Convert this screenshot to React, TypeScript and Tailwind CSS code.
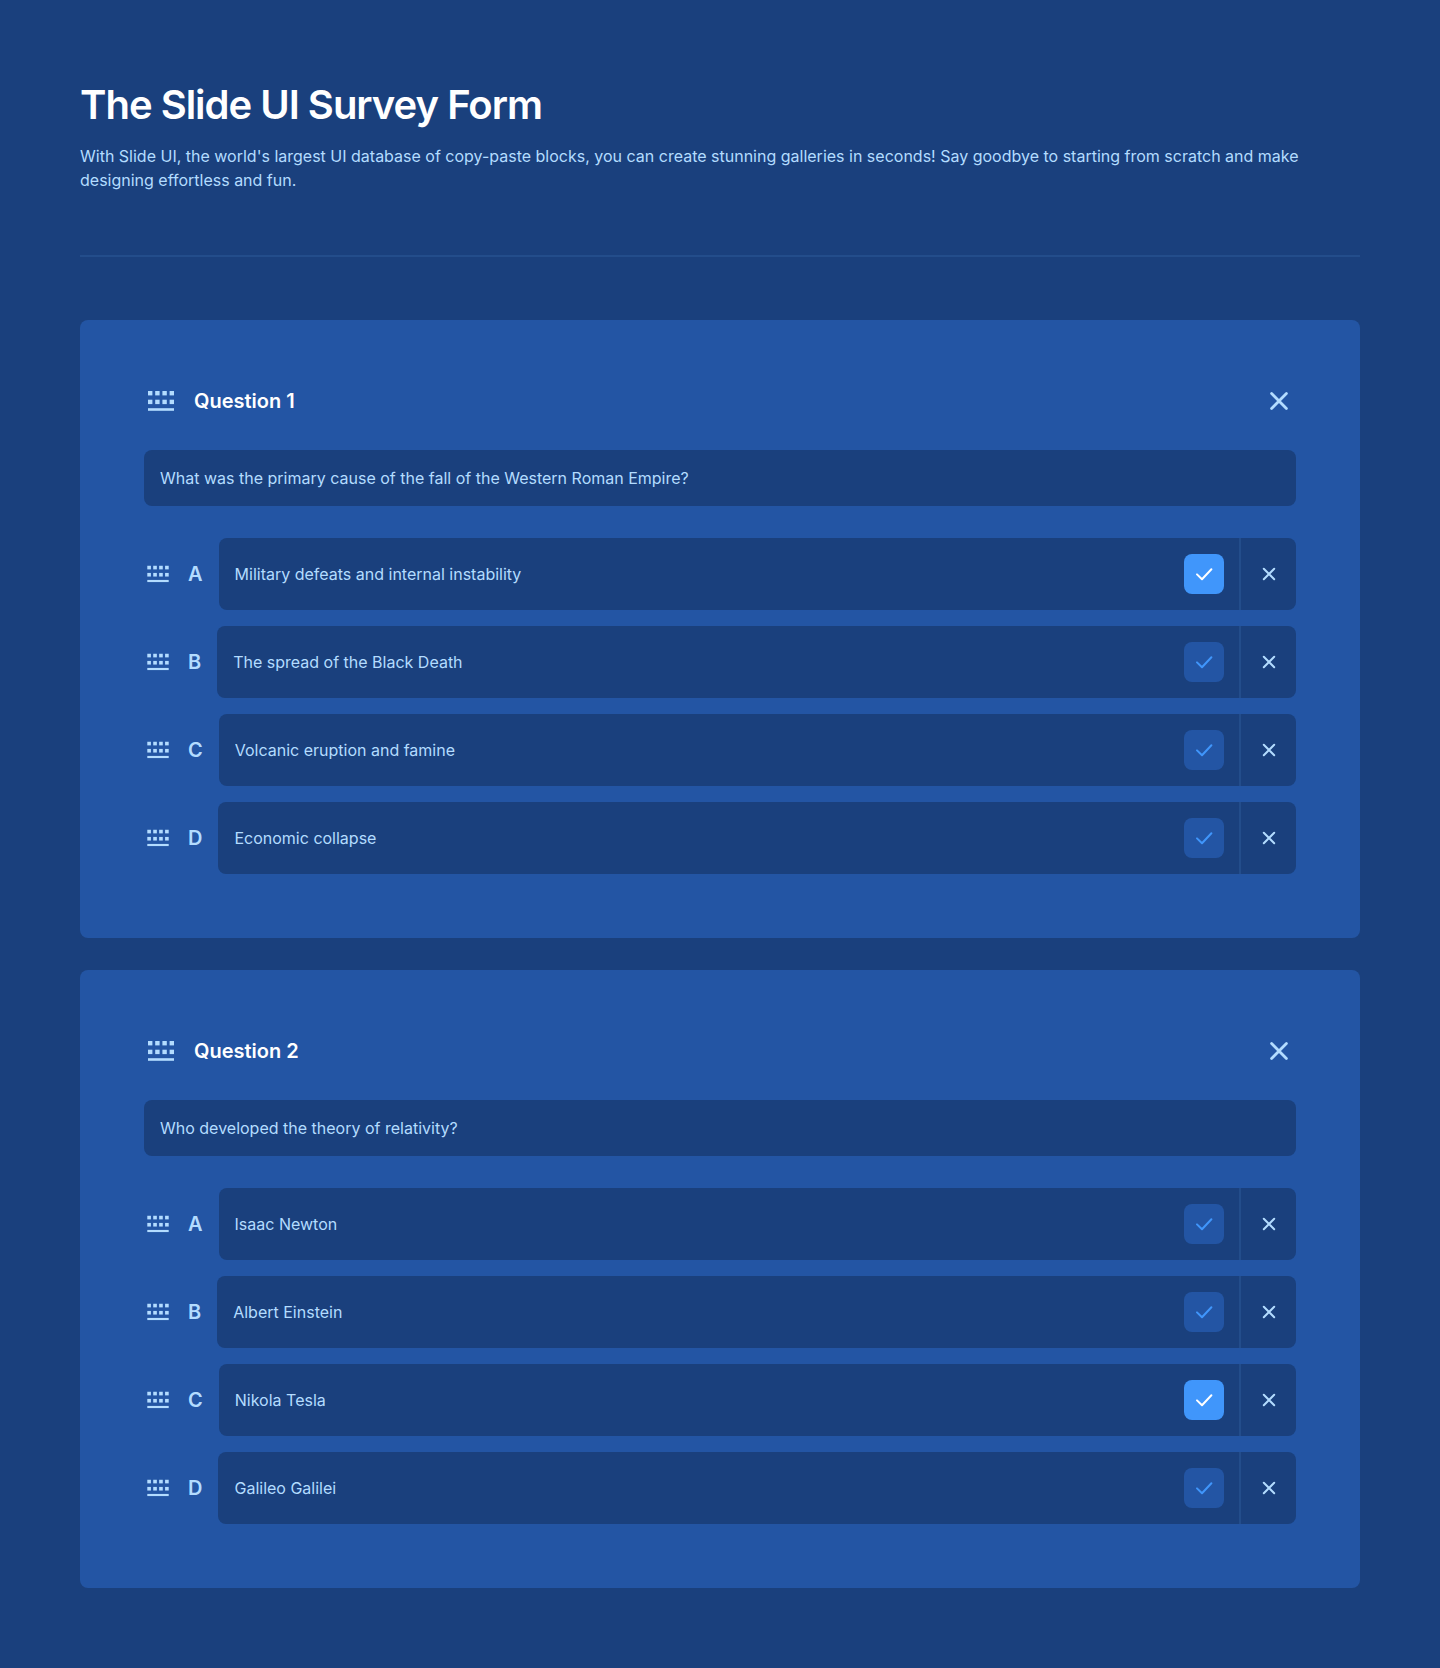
import { useState } from "react";

type Answer = { id: string; letter: string; text: string; correct: boolean };
type Question = { id: number; prompt: string; answers: Answer[] };

const initialQuestions: Question[] = [
  {
    id: 1,
    prompt: "What was the primary cause of the fall of the Western Roman Empire?",
    answers: [
      { id: "1a", letter: "A", text: "Military defeats and internal instability", correct: true },
      { id: "1b", letter: "B", text: "The spread of the Black Death", correct: false },
      { id: "1c", letter: "C", text: "Volcanic eruption and famine", correct: false },
      { id: "1d", letter: "D", text: "Economic collapse", correct: false },
    ],
  },
  {
    id: 2,
    prompt: "Who developed the theory of relativity?",
    answers: [
      { id: "2a", letter: "A", text: "Isaac Newton", correct: false },
      { id: "2b", letter: "B", text: "Albert Einstein", correct: false },
      { id: "2c", letter: "C", text: "Nikola Tesla", correct: true },
      { id: "2d", letter: "D", text: "Galileo Galilei", correct: false },
    ],
  },
];

function GripIcon({ className }: { className: string }) {
  return (
    <svg viewBox="0 0 34 34" className={className} fill="currentColor" aria-hidden="true">
      {[4, 11.2, 18.4, 25.6].map((x) => (
        <g key={x}>
          <rect x={x} y={7} width={4.4} height={4.4} />
          <rect x={x} y={15.7} width={4.4} height={4.4} />
        </g>
      ))}
      <rect x={4} y={24.2} width={26} height={2.6} />
    </svg>
  );
}

function CrossIcon({ className }: { className: string }) {
  return (
    <svg viewBox="0 0 34 34" className={className} fill="none" stroke="currentColor" strokeWidth={2.8} strokeLinecap="round" aria-hidden="true">
      <path d="M9.6 9.6l14.8 14.8M24.4 9.6l-14.8 14.8" />
    </svg>
  );
}

function CheckIcon() {
  return (
    <svg viewBox="0 0 24 24" className="size-6" fill="none" stroke="currentColor" strokeWidth={2} strokeLinecap="round" strokeLinejoin="round" aria-hidden="true">
      <path d="M5 12.4l5 4.8L19.4 7.2" />
    </svg>
  );
}

export default function App() {
  const [questions, setQuestions] = useState(initialQuestions);

  const removeQuestion = (id: number) => setQuestions((qs) => qs.filter((q) => q.id !== id));
  const updateAnswers = (id: number, change: (answers: Answer[]) => Answer[]) =>
    setQuestions((qs) => qs.map((q) => (q.id === id ? { ...q, answers: change(q.answers) } : q)));

  return (
    <main className="min-h-screen bg-[#1a407d] p-20 font-['Inter',sans-serif] text-base text-[#b3dcff]">
      <header className="mb-16 flex flex-col gap-[14px]">
        <h1 className="text-[40px] leading-[50px] font-semibold tracking-tight text-white">The Slide UI Survey Form</h1>
        <p className="leading-6">
          With Slide UI, the world's largest UI database of copy-paste blocks, you can create stunning galleries in
          seconds! Say goodbye to starting from scratch and make designing effortless and fun.
        </p>
      </header>
      <hr className="-my-px border-t-2 border-[#234d8b]" />
      <form className="mt-16 flex flex-col gap-8" onSubmit={(e) => e.preventDefault()}>
        {questions.map((q) => (
          <section key={q.id} className="flex flex-col gap-8 rounded-lg bg-[#2355a4] p-16">
            <div className="flex items-center gap-4">
              <button type="button" aria-label={`Move question ${q.id}`} className="cursor-grab">
                <GripIcon className="size-[34px]" />
              </button>
              <h2 className="grow text-xl font-semibold text-white">
                <label htmlFor={`question-${q.id}`}>Question {q.id}</label>
              </h2>
              <button type="button" aria-label={`Remove question ${q.id}`} onClick={() => removeQuestion(q.id)}>
                <CrossIcon className="size-[34px]" />
              </button>
            </div>
            <input id={`question-${q.id}`} type="text" defaultValue={q.prompt} className="h-14 w-full rounded-lg bg-[#1a407d] px-4" />
            <ul className="flex flex-col gap-4">
              {q.answers.map((a) => (
                <li key={a.id} className="flex items-center gap-4">
                  <button type="button" aria-label={`Move answer ${a.letter}`} className="cursor-grab">
                    <GripIcon className="size-7" />
                  </button>
                  <label htmlFor={`answer-${a.id}`} className="text-xl font-semibold">
                    {a.letter}
                  </label>
                  <div className="flex h-18 min-w-0 grow items-center rounded-lg bg-[#1a407d]">
                    <input id={`answer-${a.id}`} type="text" defaultValue={a.text} className="h-full min-w-0 grow rounded-lg px-4" />
                    <button
                      type="button"
                      aria-label={`Mark answer ${a.letter} as correct`}
                      aria-pressed={a.correct}
                      onClick={() => updateAnswers(q.id, (as) => as.map((x) => ({ ...x, correct: x.id === a.id })))}
                      className={`mr-[15px] flex size-10 shrink-0 items-center justify-center rounded-lg ${
                        a.correct ? "bg-[#4096fb] text-white" : "bg-[#2355a4] text-[#4096fb]"
                      }`}
                    >
                      <CheckIcon />
                    </button>
                    <button
                      type="button"
                      aria-label={`Remove answer ${a.letter}`}
                      onClick={() => updateAnswers(q.id, (as) => as.filter((x) => x.id !== a.id))}
                      className="flex h-full w-[57px] shrink-0 items-center justify-center border-l-2 border-[#234d8b]"
                    >
                      <CrossIcon className="size-6" />
                    </button>
                  </div>
                </li>
              ))}
            </ul>
          </section>
        ))}
      </form>
    </main>
  );
}
